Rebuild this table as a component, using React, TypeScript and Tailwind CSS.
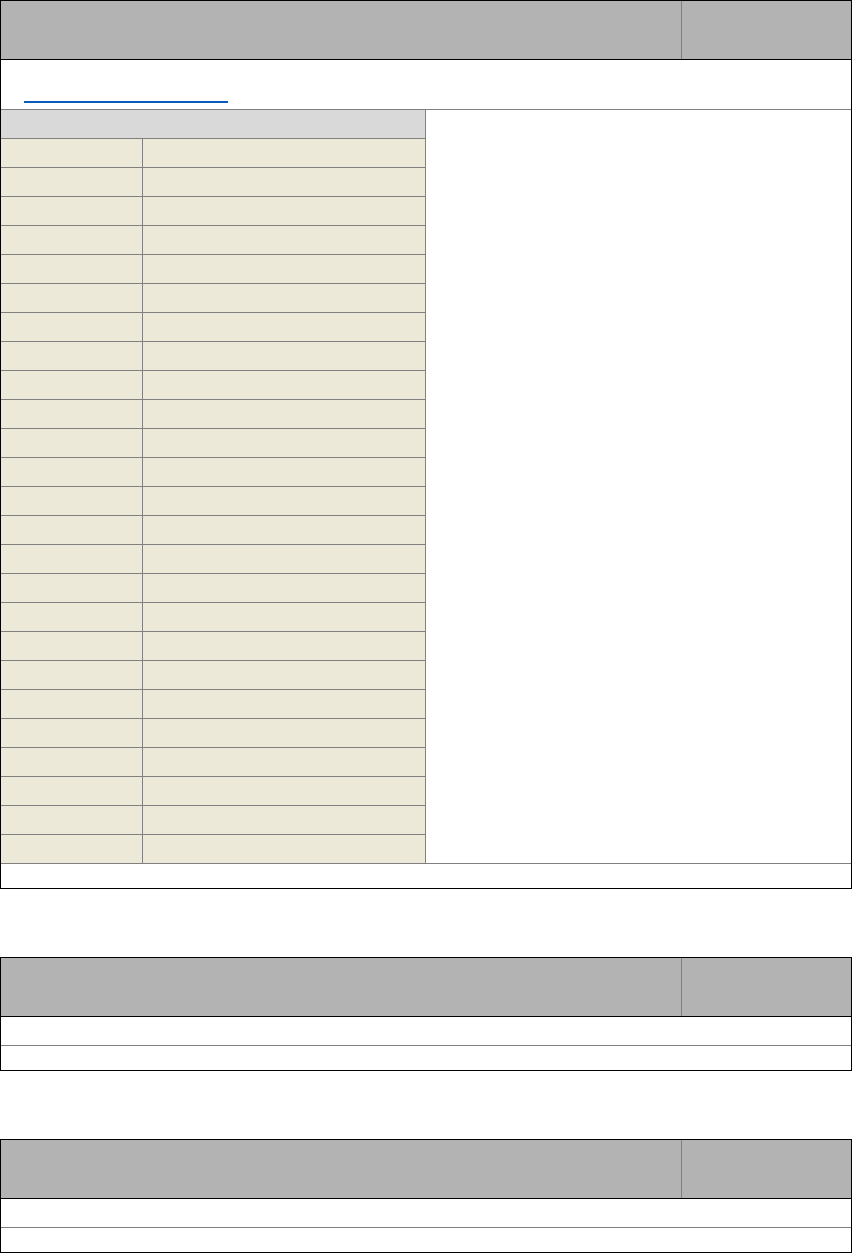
const rows = Array.from({ length: 25 }, (_, i) => i);

function Header() {
  return (
    <div className="flex h-[59px] bg-[#b3b3b3] border-b border-black">
      <div className="w-[681px] border-r border-[#808080]" />
      <div className="flex-1" />
    </div>
  );
}

function SmallTable() {
  return (
    <div className="w-[852px] border border-black font-['Liberation_Sans',sans-serif] text-sm">
      <Header />
      <div className="h-[29px] border-b border-[#808080]" />
      <div className="h-[24px]" />
    </div>
  );
}

export default function App() {
  return (
    <div className="w-[852px] bg-white flex flex-col font-['Liberation_Sans',sans-serif] text-sm">
      <div className="w-[852px] border border-black">
        <Header />
        <div className="h-[50px] border-b border-[#808080] pl-[23px] pt-[41px]">
          <a href="#" className="block w-[204px] h-[2px] bg-[#0a5cb8]" />
        </div>
        <div className="flex border-b border-[#808080]">
          <div className="w-[425px] border-r border-[#808080] flex flex-col">
            <div className="h-[29px] bg-[#d9d9d9] border-b border-[#808080]" />
            {rows.map((i) => (
              <div
                key={i}
                className={
                  i < rows.length - 1
                    ? "flex h-[29px] bg-[#ece9d8] border-b border-[#808080]"
                    : "flex h-[28px] bg-[#ece9d8]"
                }
              >
                <div className="w-[142px] border-r border-[#808080]" />
                <div className="flex-1" />
              </div>
            ))}
          </div>
          <div className="flex-1" />
        </div>
        <div className="h-[24px]" />
      </div>
      <div className="mt-[68px]">
        <SmallTable />
      </div>
      <div className="mt-[68px]">
        <SmallTable />
      </div>
    </div>
  );
}
